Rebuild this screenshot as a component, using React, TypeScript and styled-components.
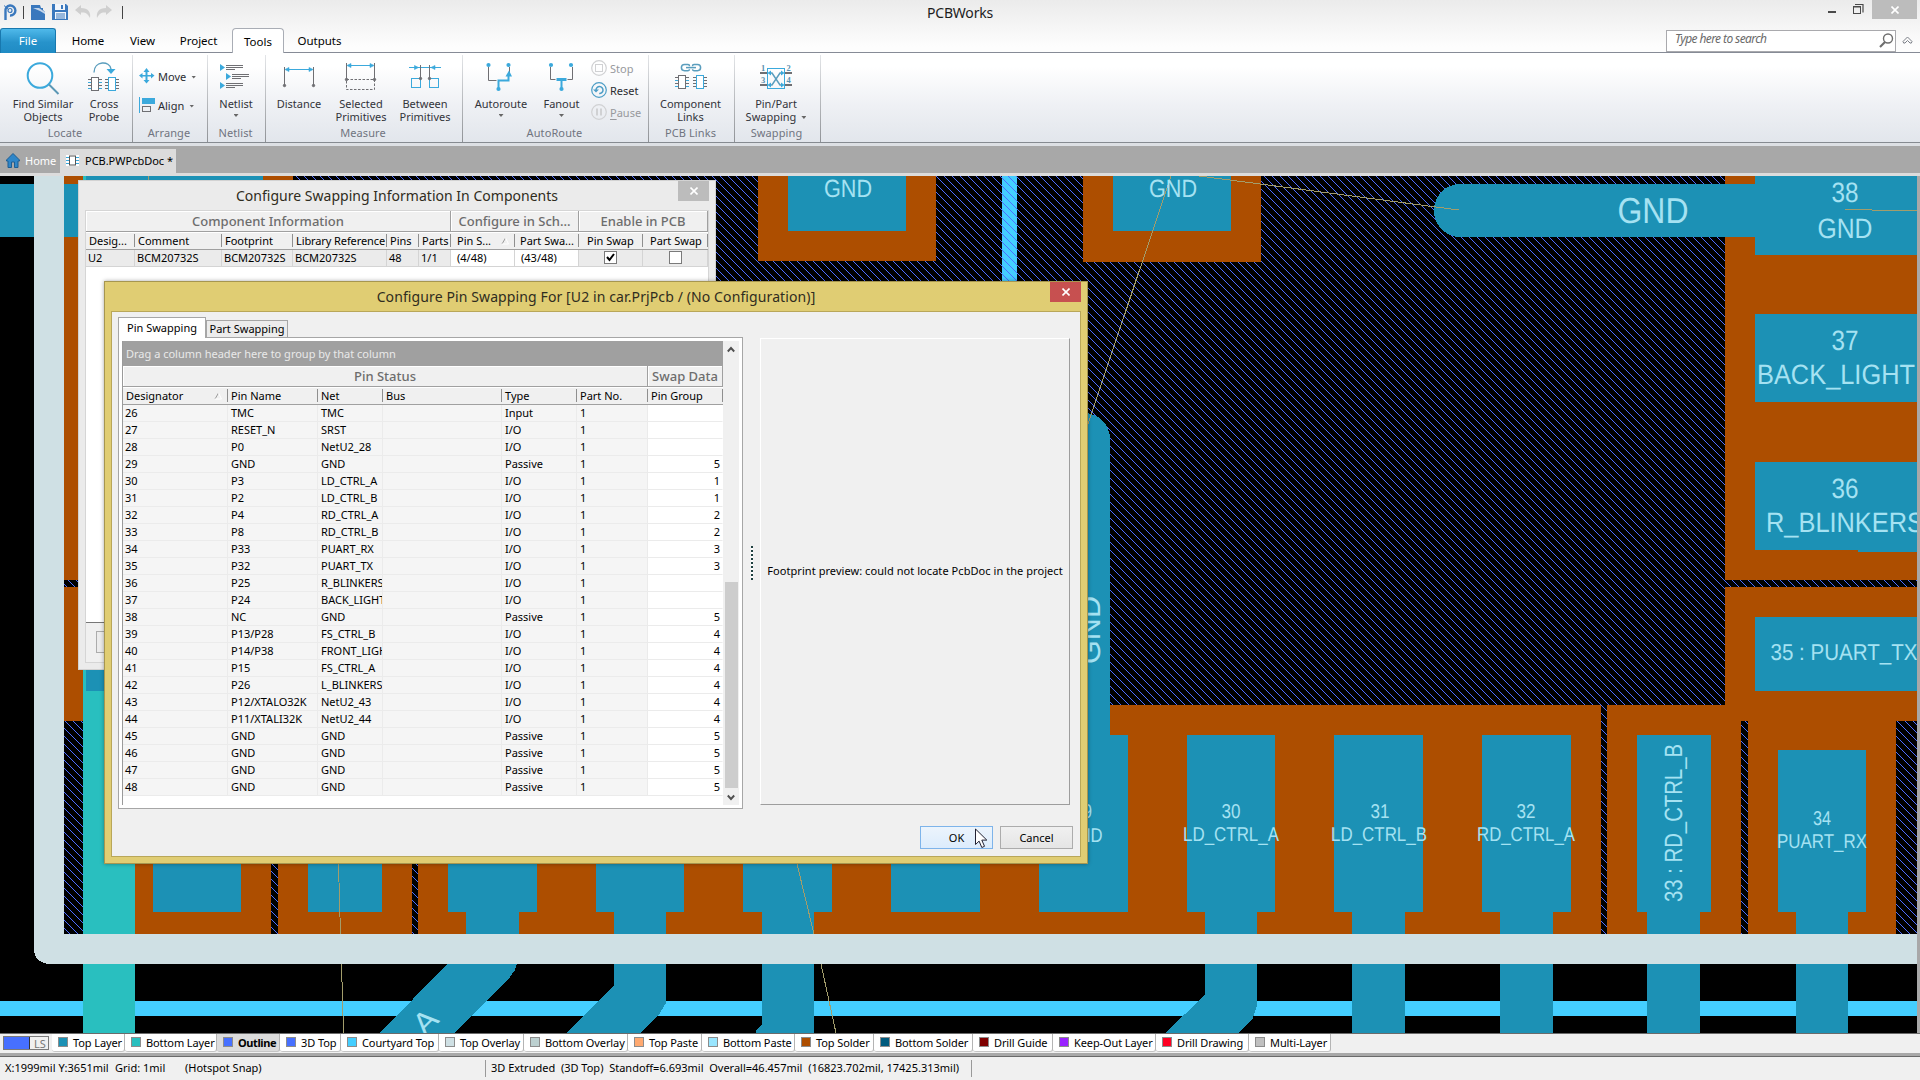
import React from "react";
import styled, { createGlobalStyle, css } from "styled-components";

const UI = `"Noto Sans", "Open Sans", sans-serif`;
const BOARD = `"Liberation Sans", Arial, sans-serif`;
const PAD = "#1c91b5";
const SOLDER = "#ad4e00";
const SKY = "#3ba9dc";
const INK = "#6f6f73";

const Global = createGlobalStyle`
  * { box-sizing: border-box; }
  html, body { margin: 0; padding: 0; overflow: hidden; }
  body { font-family: ${UI}; font-size: 11px; color: #000; }
`;

/* ---------- frame ---------- */

const Window = styled.div`
  position: relative;
  width: 1920px;
  height: 1080px;
  display: flex;
  flex-direction: column;
  overflow: hidden;
  background: #f0f0f0;
  white-space: nowrap;
`;

const Header = styled.header`
  height: 53px;
  flex: none;
  display: flex;
  flex-direction: column;
  background: linear-gradient(#ebebeb, #fdfdfd 90%);
  border-bottom: 1px solid #868b96;
`;

const TitleBar = styled.div`
  height: 27px;
  flex: none;
  display: grid;
  grid-template-columns: 300px 1fr 300px;
`;

const QuickBar = styled.div`
  display: flex;
  align-items: center;
  height: 24px;
  padding-left: 3px;
`;

const QuickDivider = styled.i<{ $l: number; $r: number }>`
  width: 1px;
  height: 13px;
  background: #444;
  margin: 1px ${(p) => p.$r}px 0 ${(p) => p.$l}px;
`;

const QuickIcon = styled.svg<{ $l?: number }>`
  flex: none;
  margin-left: ${(p) => p.$l ?? 0}px;
`;

const AppTitle = styled.div`
  text-align: center;
  font-size: 14px;
  line-height: 25px;
  letter-spacing: -0.2px;
  color: #1d1d1d;
`;

const WindowButtons = styled.div`
  display: flex;
  justify-content: flex-end;
  align-items: flex-start;
  padding-right: 3px;
  svg { display: block; }
`;

const CloseCap = styled.div<{ $w: number; $h: number; $bg: string }>`
  width: ${(p) => p.$w}px;
  height: ${(p) => p.$h}px;
  background: ${(p) => p.$bg};
  display: flex;
  align-items: center;
  justify-content: center;
`;

const TabStrip = styled.nav`
  display: flex;
  height: 26px;
  align-items: flex-end;
`;

const FileTab = styled.div`
  width: 56px;
  height: 25px;
  line-height: 23px;
  border: 1px solid #1878ae;
  border-bottom: 0;
  border-radius: 3px 3px 0 0;
  background: linear-gradient(#4fb9ea, #2793cb 55%, #1f8bc4);
  color: #fff;
  text-align: center;
  font-size: 11.5px;
`;

const RibbonTab = styled.div<{ $w: number; $active?: boolean }>`
  width: ${(p) => p.$w}px;
  height: 25px;
  line-height: 26px;
  text-align: center;
  font-size: 11.5px;
  ${(p) =>
    p.$active &&
    css`
      height: 26px;
      line-height: 25px;
      margin-bottom: -1px;
      background: #fff;
      border: 1px solid #a9adb5;
      border-bottom: 0;
      border-radius: 4px 4px 0 0;
    `}
`;

const SearchRow = styled.div`
  margin-left: auto;
  display: flex;
  align-items: center;
  height: 26px;
  gap: 6px;
  padding-right: 7px;
`;

const SearchBox = styled.div`
  width: 230px;
  height: 22px;
  margin-top: 1px;
  border: 1px solid #a9a9ad;
  background: #fff;
  display: flex;
  align-items: center;
  justify-content: space-between;
  padding: 0 1px 0 8px;
  font-size: 12px;
  font-style: italic;
  letter-spacing: -0.6px;
  color: #6a6a6a;
  > span { margin-top: -4px; }
`;

const Ribbon = styled.div`
  height: 90px;
  flex: none;
  display: flex;
  padding-top: 2px;
  background: linear-gradient(#ffffff 15%, #eef0f4 60%, #e2e6ec);
  border-bottom: 1px solid #868b91;
`;

const Group = styled.section<{ $w: number }>`
  width: ${(p) => p.$w}px;
  height: 87px;
  display: flex;
  flex-direction: column;
  border-right: 1px solid;
  border-image: linear-gradient(#e4e6e9, #8f9296) 1;
`;

const GroupBody = styled.div<{ $pad?: number }>`
  height: 70px;
  flex: none;
  display: flex;
  padding-left: ${(p) => p.$pad ?? 0}px;
`;

const GroupName = styled.div`
  text-align: center;
  line-height: 16px;
  padding-right: 2px;
  color: #70747f;
  letter-spacing: 0.1px;
`;

const BigButton = styled.div<{ $w: number }>`
  width: ${(p) => p.$w}px;
  display: flex;
  flex-direction: column;
  align-items: center;
  text-align: center;
  color: #33343a;
  line-height: 13px;
  padding-top: 6px;
  > svg { height: 34px; width: 40px; margin-bottom: 2px; flex: none; }
`;

const Caret = styled.i`
  display: inline-block;
  width: 5px;
  height: 3px;
  background: #666;
  clip-path: polygon(0 0, 100% 0, 50% 100%);
  margin: 0 0 2px 5px;
`;

const CaretBelow = styled(Caret)`
  margin: 4px 0 0;
`;

const SmallColumn = styled.div<{ $gap: number; $top: number; $left: number }>`
  height: 70px;
  flex: none;
  display: flex;
  flex-direction: column;
  gap: ${(p) => p.$gap}px;
  padding: ${(p) => p.$top}px 0 0 ${(p) => p.$left}px;
`;

const SmallButton = styled.div<{ $dim?: boolean }>`
  height: 16px;
  flex: none;
  display: flex;
  align-items: center;
  gap: 3px;
  color: ${(p) => (p.$dim ? "#97999d" : "#2b2c31")};
  u { text-underline-offset: 2px; }
`;

const DocBar = styled.div`
  height: 33px;
  flex: none;
  display: flex;
  align-items: flex-end;
  background: #a8a8a8;
  border-top: 3px solid #dde0e4;
  border-bottom: 3px solid #dcdcdc;
`;

const DocTab = styled.div<{ $w: number; $active?: boolean }>`
  width: ${(p) => p.$w}px;
  height: 24px;
  display: flex;
  align-items: center;
  gap: ${(p) => (p.$active ? 6 : 5)}px;
  padding: 0 0 2px 6px;
  color: ${(p) => (p.$active ? "#000" : "#fff")};
  background: ${(p) => (p.$active ? "#dcdcdc" : "transparent")};
`;

const Workspace = styled.main`
  height: 857px;
  flex: none;
  background: #a8a8a8;
  svg { display: block; }
`;

/* ---------- bottom bars ---------- */

const LayerBar = styled.div`
  height: 20px;
  flex: none;
  display: flex;
  border-top: 1px solid #6b6b6b;
  padding-left: 3px;
`;

const LayerSet = styled.div`
  width: 46px;
  height: 14px;
  margin: 2px 3px 0 0;
  display: flex;
  border: 1px solid #7a7a7a;
  color: #777;
  line-height: 13px;
  &::before {
    content: "";
    width: 25px;
    margin-right: 4px;
    background: #4770ff;
    border-right: 1px solid #333;
  }
`;

const LayerTab = styled.div<{ $w: number; $active?: boolean }>`
  width: ${(p) => p.$w}px;
  height: 18px;
  display: flex;
  align-items: center;
  gap: 5px;
  padding-left: 6px;
  background: ${(p) => (p.$active ? "#dcdcdc" : "#fff")};
  border-right: 1px solid #b4b4b4;
  border-bottom: 1px solid #c4c4c4;
  border-radius: 0 0 3px 3px;
  font-weight: ${(p) => (p.$active ? 700 : 400)};
  letter-spacing: ${(p) => (p.$active ? -0.4 : -0.1)}px;
  overflow: hidden;
`;

const Swatch = styled.i<{ $c: string }>`
  width: 10px;
  height: 10px;
  flex: none;
  margin-bottom: 1px;
  background: ${(p) => p.$c};
  border: 1px solid #8c8c8c;
`;

const StatusBar = styled.footer`
  height: 27px;
  flex: none;
  display: flex;
  align-items: center;
  background: #f0f0f0;
  border-top: 3px solid #a8a8a8;
  box-shadow: inset 0 1px 0 #6a6a6a;
  padding: 0 0 1px 5px;
`;

const StatusText = styled.span<{ $w: number }>`
  width: ${(p) => p.$w}px;
  white-space: pre;
`;

const StatusRule = styled.i`
  width: 1px;
  height: 17px;
  background: #999;
  margin: 1px 5px 0 0;
`;

/* ---------- dialogs ---------- */

const Dialog = styled.div<{ $x: number; $y: number; $w: number; $h: number; $gold?: boolean }>`
  position: absolute;
  left: ${(p) => p.$x}px;
  top: ${(p) => p.$y}px;
  width: ${(p) => p.$w}px;
  height: ${(p) => p.$h}px;
  display: flex;
  flex-direction: column;
  background: ${(p) => (p.$gold ? "#e0cd73" : "#ebebeb")};
  border: 1px solid ${(p) => (p.$gold ? "#a69650" : "#d2d2d2")};
  padding: 0 6px 6px;
  ${(p) => p.$gold && "box-shadow: 0 0 4px rgba(0, 0, 0, 0.35);"}
`;

const DialogTitle = styled.div<{ $ls: number }>`
  height: 29px;
  flex: none;
  display: grid;
  grid-template-columns: 31px 1fr 31px;
  text-align: center;
  font-size: 14px;
  line-height: 29px;
  letter-spacing: ${(p) => p.$ls}px;
  color: #2f2c20;
`;

const DialogBody = styled.div`
  flex: 1;
  min-height: 0;
  display: flex;
  flex-direction: column;
  background: #f0f0f0;
  border: 1px solid #b9a759;
`;

const Columns = styled.div`
  display: flex;
  height: 492px;
  margin-top: 5px;
  padding-left: 6px;
`;

const TabPane = styled.div`
  width: 625px;
  display: flex;
  flex-direction: column;
`;

const PageTabs = styled.div`
  height: 20px;
  flex: none;
  display: flex;
  align-items: flex-end;
`;

const PageTab = styled.div<{ $w: number; $active?: boolean }>`
  width: ${(p) => p.$w}px;
  height: ${(p) => (p.$active ? 21 : 17)}px;
  line-height: ${(p) => (p.$active ? 19 : 15)}px;
  margin-bottom: ${(p) => (p.$active ? -1 : 0)}px;
  z-index: ${(p) => (p.$active ? 1 : 0)};
  text-align: center;
  background: ${(p) => (p.$active ? "#fff" : "#ececec")};
  border: 1px solid #a6a6a6;
  border-bottom: 0;
`;

const Page = styled.div`
  flex: 1;
  display: flex;
  background: #fff;
  border: 1px solid #a6a6a6;
  padding: 3px;
`;

const PinGrid = styled.div`
  width: 601px;
  border-left: 1px solid #9a9a9a;
`;

const DragHint = styled.div`
  height: 25px;
  line-height: 26px;
  padding-left: 3px;
  background: #a0a0a0;
  color: #e9e9e9;
`;

const GridLine = styled.div<{ $cols: string; $h: number }>`
  display: grid;
  grid-template-columns: ${(p) => p.$cols};
  height: ${(p) => p.$h}px;
`;

const Band = styled.div`
  background: #f0f0f0;
  border-right: 1px solid #a0a0a0;
  border-bottom: 1px solid #a0a0a0;
  box-shadow: inset 1px 1px 0 #fff;
  text-align: center;
  font-size: 13px;
  font-weight: 500;
  line-height: 20px;
  color: #6d6d6d;
  overflow: hidden;
`;

const Head = styled.div<{ $pad?: number; $center?: boolean; $ls?: number }>`
  display: flex;
  justify-content: space-between;
  align-items: center;
  background: #f0f0f0;
  border-bottom: 1px solid #a0a0a0;
  padding-left: ${(p) => p.$pad ?? 3}px;
  line-height: 15px;
  letter-spacing: ${(p) => p.$ls ?? 0}px;
  box-shadow: inset 0 1px 0 #fff;
  overflow: hidden;
  &::after {
    content: "";
    width: 1px;
    height: 13px;
    background: #8f8f8f;
  }
`;

const SortMark = styled.span`
  margin: 0 5px 0 auto;
  display: flex;
`;

const Cell = styled.div<{ $editable?: boolean; $tone?: string; $center?: boolean; $pad?: number }>`
  padding: 0 2px 0 ${(p) => p.$pad ?? 2}px;
  line-height: 16px;
  overflow: hidden;
  background: ${(p) => (p.$editable ? "#fff" : p.$tone ?? "#f5f5f5")};
  border-right: 1px solid ${(p) => (p.$editable ? "#fff" : p.$tone ? "#d4d4d4" : "#ebebeb")};
  border-bottom: 1px solid ${(p) => (p.$tone ? "#d4d4d4" : "#ebebeb")};
  text-align: ${(p) => (p.$editable ? "right" : "left")};
  ${(p) => p.$center && "display: flex; justify-content: center; align-items: center;"}
`;

const ScrollBar = styled.div`
  width: 16px;
  background: #f0f0f0;
  display: flex;
  flex-direction: column;
  align-items: center;
  padding: 5px 0 4px;
`;

const Thumb = styled.div`
  width: 13px;
  height: 206px;
  margin: auto 0 6px;
  background: #cdcdcd;
`;

const Splitter = styled.div`
  width: 17px;
  display: flex;
  align-items: center;
  justify-content: center;
  &::before {
    content: "";
    width: 2px;
    height: 34px;
    margin-left: 1px;
    background: repeating-linear-gradient(#1e4040 0 2px, #fff 2px 4px);
  }
`;

const Preview = styled.div`
  width: 310px;
  height: 467px;
  margin-top: 21px;
  padding-bottom: 2px;
  display: flex;
  align-items: center;
  justify-content: center;
  letter-spacing: 0.06px;
  border: 1px solid #fff;
  border-right-color: #9d9d9d;
  border-bottom-color: #9d9d9d;
`;

const Buttons = styled.div`
  display: flex;
  justify-content: flex-end;
  gap: 7px;
  padding: 17px 7px 0 0;
`;

const Button = styled.div<{ $primary?: boolean }>`
  width: 73px;
  height: 23px;
  line-height: 21px;
  text-align: center;
  border: 1px solid ${(p) => (p.$primary ? "#7eb4ea" : "#acacac")};
  background: ${(p) => (p.$primary ? "linear-gradient(#ecf4fc, #dcecfc)" : "linear-gradient(#f0f0f0, #e5e5e5)")};
`;

const CompGrid = styled.div`
  flex: 1;
  background: #fff;
  border: 1px solid #d5d5d5;
  display: flex;
  flex-direction: column;
`;

const CompFooter = styled.div`
  height: 40px;
  margin-top: auto;
  background: #f0f0f0;
  border-top: 1px solid #777;
  padding: 8px 0 0 10px;
`;

const MenuButton = styled.div`
  width: 80px;
  height: 22px;
  border: 1px solid #acacac;
  background: #ececec;
`;

const Check = styled.i`
  width: 13px;
  height: 13px;
  background: #fff;
  border: 1px solid #7a7a7a;
  display: flex;
  margin-top: -2px;
`;

const Pointer = styled.svg`
  position: absolute;
  left: 974px;
  top: 828px;
`;

/* ---------- drawings ---------- */

const X = () => (
  <svg width="8" height="8" viewBox="0 0 8 8" stroke="#fff" strokeWidth="1.6" fill="none">
    <path d="M.5.5l7 7M7.5.5l-7 7" />
  </svg>
);

const Triangle = () => (
  <svg width="8" height="8" fill="none">
    <path d="M1 7L4.500 1" stroke="#9a9a9a" />
    <path d="M4.500 1L7.500 7H1" stroke="#fff" />
  </svg>
);

const Chevron = ({ down }: { down?: boolean }) => (
  <svg width="8" height="7" fill="none" stroke="#505050" strokeWidth="1.9">
    <path d={down ? "M.8 1.500L4 5l3.200-3.500" : "M.8 5.500L4 2l3.200 3.500"} />
  </svg>
);

const Chip = ({ x, y, c }: { x: number; y: number; c: string }) => {
  const pins = c === INK ? SKY : INK;
  return (
    <g fill="none">
      {[2.5, 5.5, 8.5, 11.5].map((d, i) => (
        <path
          key={d}
          d={`M${x} ${y + d}h3M${x + 11} ${y + d}h3`}
          stroke={i % 2 ? pins : INK}
        />
      ))}
      <rect x={x + 3.5} y={y + 0.5} width="7" height="13" stroke={c} fill="#fff" />
    </g>
  );
};

const icons: Record<string, React.ReactNode> = {
  find: (
    <g fill="none" stroke={SKY} strokeWidth="2">
      <circle cx="17" cy="14.500" r="12.300" />
      <path d="M26 23.500l9.500 9.500" stroke="#5b97b5" />
    </g>
  ),
  cross: (
    <g>
      <path d="M10 11.500C10 -.5 26 -.5 27 8" fill="none" stroke="#5a9dbd" strokeWidth="1.400" />
      <path d="M22.500 8h9l-4.500 5z" fill={SKY} />
      <Chip x={4} y={16} c={INK} />
      <Chip x={21} y={16} c={SKY} />
    </g>
  ),
  netlist: (
    <g>
      {[[4, 3], [10, 12], [4, 21]].map(([x, y]) => (
        <g key={y}>
          <path d={`M${x} ${y}l5 3.500l-5 3.500z`} fill={SKY} />
          <path d={`M${x + 6} ${y + 1.500}h17M${x + 6} ${y + 3.500}h17M${x + 6} ${y + 5.500}h9`} stroke={INK} />
        </g>
      ))}
    </g>
  ),
  distance: (
    <g stroke={INK}>
      <path d="M5.500 6v18M34.500 6v18" fill="none" />
      <path d="M7 8.500h26" stroke={SKY} />
      <path d="M6 8.500l4-2v4zM34 8.500l-4-2v4z" fill={SKY} stroke={SKY} strokeWidth=".6" />
      <circle cx="5.500" cy="24.500" r="1.200" fill={INK} />
      <circle cx="34.500" cy="24.500" r="1.200" fill={INK} />
    </g>
  ),
  selected: (
    <g stroke={INK} fill="none">
      <path d="M5.500 2v17M33.500 2v17" />
      <path d="M7 4.500h25" stroke={SKY} />
      <path d="M6 4.500l4-2v4zM33 4.500l-4-2v4z" fill={SKY} stroke={SKY} strokeWidth=".6" />
      <rect x="5.500" y="18.500" width="28" height="10" strokeDasharray="2.500 1.500" />
      <circle cx="5.500" cy="18.500" r="1.200" fill={INK} />
      <circle cx="33.500" cy="18.500" r="1.200" fill={INK} />
    </g>
  ),
  between: (
    <g fill="none" stroke={SKY}>
      <path d="M4 6.500h32" />
      <path d="M9.500 4.500v4l4-2zM30 4.500v4l-4-2z" fill={SKY} strokeWidth=".6" />
      <rect x="6.500" y="17.500" width="9" height="9" />
      <rect x="24.500" y="17.500" width="9" height="9" />
      <path d="M15.500 4v13M24.500 4v13" stroke={INK} />
      <circle cx="15.500" cy="17.500" r="1.200" fill={INK} stroke={INK} />
      <circle cx="24.500" cy="17.500" r="1.200" fill={INK} stroke={INK} />
    </g>
  ),
  autoroute: (
    <g fill="none">
      <path d="M7.500 6v13.500h8" stroke={INK} />
      <path d="M28.500 6v6" stroke={INK} />
      <path d="M17.500 27v-7.500h10v-6" stroke={SKY} strokeWidth="2" />
      <path d="M24.500 15.500l3.500-6l3 6z" fill={SKY} />
      <g fill={SKY}>
        <circle cx="7.500" cy="4" r="2.100" />
        <circle cx="27.500" cy="4" r="2.100" />
        <circle cx="17.500" cy="28" r="2.100" />
      </g>
    </g>
  ),
  fanout: (
    <g fill="none">
      <path d="M8.500 6v12.500h5M30.500 6v12.500h-5" stroke={INK} />
      <path d="M14.500 18.500h10" stroke={SKY} strokeWidth="3" />
      <path d="M19.500 19v8" stroke={SKY} strokeWidth="2" />
      <g fill={SKY}>
        <circle cx="9" cy="4" r="2.100" />
        <circle cx="29" cy="4" r="2.100" />
        <circle cx="19.500" cy="28" r="2.100" />
      </g>
    </g>
  ),
  links: (
    <g>
      <g fill="none" stroke="#5a9dbd" strokeWidth="1.500">
        <path d="M18.500 5.200v-.2q0-1.500-1.500-1.500h-3.500a3.100 3.100 0 0 0 0 6.200h3.500q1.500 0 1.500-1.400" />
        <path d="M21.500 5.200v-.2q0-1.500 1.500-1.500h3.500a3.100 3.100 0 0 1 0 6.200h-3.500q-1.500 0-1.500-1.400" />
        <path d="M15 6.600h10" />
      </g>
      <Chip x={4} y={14} c={INK} />
      <Chip x={22} y={14} c={SKY} />
    </g>
  ),
  swap: (
    <g fill="none">
      <path d="M4 12h7M29 12h7M4 24h7M29 24h7" stroke={INK} strokeWidth="1.800" />
      <rect x="11.500" y="7.500" width="17" height="20" stroke={SKY} />
      <path d="M14 12h2l8 12h2M14 24h2l8-12h2" stroke="#5a9dbd" strokeWidth="1.500" />
      <path d="M11.500 12l3.500-2.500v5zM28.500 12l-3.500-2.500v5zM11.500 24l3.500-2.500v5zM28.500 24l-3.500-2.500v5z" fill={SKY} />
      <g fill="#5a8fae" fontSize="8.500" fontWeight="700" fontFamily="Liberation Serif, serif">
        <text x="5" y="10">1</text>
        <text x="30.500" y="10">2</text>
        <text x="5" y="22">3</text>
        <text x="30.500" y="22">4</text>
      </g>
    </g>
  ),
};

const BigIcon = ({ name }: { name: string }) => (
  <svg width="40" height="34" viewBox="0 0 40 34">
    {icons[name]}
  </svg>
);

const RoundIcon = ({ kind }: { kind: "stop" | "reset" | "pause" }) => {
  const c = kind === "reset" ? "#4c9dc6" : "#d0d1d3";
  return (
    <svg width="16" height="16" fill="none" stroke={c}>
      <circle cx="8" cy="8" r="7.300" strokeWidth="1.200" />
      {kind === "stop" && <rect x="4.500" y="4.500" width="7" height="7" />}
      {kind === "pause" && <path d="M6 4.500v7M10 4.500v7" strokeWidth="2" />}
      {kind === "reset" && (
        <>
          <path d="M5 8a3.500 3.500 0 1 1 3.200 3.500" strokeWidth="1.500" />
          <path d="M2 7.500h6l-3 3z" fill={c} stroke="none" />
        </>
      )}
    </svg>
  );
};

/* ---------- board canvas ---------- */

type Box = [number, number, number, number];

const solder: Box[] = [
  [64, 176, 19, 404], [64, 587, 19, 134], [263, 176, 30, 20],
  [758, 176, 178, 85], [1083, 176, 178, 86],
  [1725, 176, 192, 404], [1725, 587, 192, 134],
  [134, 800, 137, 134], [278, 800, 134, 134], [418, 705, 1183, 229],
  [1607, 705, 134, 229], [1741, 705, 155, 16], [1748, 705, 148, 229],
];

const pads: Box[] = [
  [64, 184, 19, 53], [86, 176, 177, 20],
  [788, 176, 118, 55], [1113, 176, 118, 55],
  [1755, 176, 162, 79], [1755, 314, 162, 88], [1755, 462, 162, 88], [1858, 540, 59, 12], [1755, 617, 162, 74],
  [153, 800, 88, 112], [308, 800, 74, 112], [448, 800, 89, 112], [596, 800, 88, 112],
  [743, 800, 89, 112], [891, 800, 89, 112], [1039, 735, 89, 177],
  [1187, 735, 88, 177], [1334, 735, 89, 177], [1482, 735, 89, 177], [1637, 735, 74, 177], [1778, 750, 88, 162],
  [1352, 911, 53, 122], [1500, 911, 53, 122], [1647, 911, 53, 122], [1796, 911, 52, 122],
  [466, 911, 53, 24], [614, 911, 52, 40], [762, 911, 52, 40], [1205, 911, 52, 40],
];

type Label = { x: number; y: number; s: number; t: string; w: number; r?: number };

/* x, y give the middle of the cap height; w is the drawn width */
const labels: Label[] = [
  { x: 848, y: 188, s: 25, t: "GND", w: 48 },
  { x: 1173, y: 188, s: 25, t: "GND", w: 48 },
  { x: 1653, y: 210, s: 36, t: "GND", w: 71 },
  { x: 1845, y: 192, s: 28, t: "38", w: 27 },
  { x: 1845, y: 228, s: 28, t: "GND", w: 55 },
  { x: 1845, y: 340, s: 28, t: "37", w: 27 },
  { x: 1836, y: 374, s: 28, t: "BACK_LIGHT", w: 158 },
  { x: 1845, y: 488, s: 28, t: "36", w: 27 },
  { x: 1845, y: 522, s: 28, t: "R_BLINKERS", w: 158 },
  { x: 1844, y: 652, s: 23, t: "35 : PUART_TX", w: 147 },
  { x: 1083, y: 811, s: 20, t: "29", w: 18 },
  { x: 1084, y: 835, s: 20, t: "GND", w: 37 },
  { x: 1231, y: 811, s: 20, t: "30", w: 19 },
  { x: 1231, y: 834, s: 20, t: "LD_CTRL_A", w: 96 },
  { x: 1380, y: 811, s: 20, t: "31", w: 19 },
  { x: 1379, y: 834, s: 20, t: "LD_CTRL_B", w: 96 },
  { x: 1526, y: 811, s: 20, t: "32", w: 19 },
  { x: 1526, y: 834, s: 20, t: "RD_CTRL_A", w: 98 },
  { x: 1822, y: 818, s: 20, t: "34", w: 18 },
  { x: 1822, y: 841, s: 20, t: "PUART_RX", w: 90 },
  { x: 1673, y: 823, s: 25, t: "33 : RD_CTRL_B", w: 158, r: -90 },
  { x: 1089, y: 630, s: 30, t: "GND", w: 68, r: -90 },
  { x: 425, y: 1021, s: 30, t: "A", w: 22, r: -45 },
];

const Board = () => (
  <svg width="1917" height="857" viewBox="0 176 1917 857" shapeRendering="crispEdges">
    <defs>
      <pattern id="hatch" width="8" height="8" patternUnits="userSpaceOnUse">
        {[0, 1, 2, 3, 4, 5, 6, 7].map((i) => (
          <rect key={i} x={i} y={i} width="1" height="1" fill="#4d6dff" />
        ))}
      </pattern>
    </defs>
    <rect y="176" width="1917" height="857" />
    <rect y="1001" width="1917" height="15" fill="#44ceff" />
    <rect y="184" width="64" height="53" fill={PAD} />
    <rect x="1002" y="176" width="15" height="120" fill="#44ceff" />
    <rect x="64" y="176" width="1853" height="758" fill="url(#hatch)" />
    {solder.map(([x, y, w, h], i) => (
      <rect key={i} x={x} y={y} width={w} height={h} fill={SOLDER} />
    ))}
    <rect x="83" y="176" width="52" height="857" fill="#29bfbf" />
    <rect x="86" y="660" width="49" height="31" fill={PAD} />
    <g fill={PAD}>
      <path d="M1765 184H1460a26 26.500 0 0 0 0 53h305z" />
      <path d="M1058 760V439a26 26 0 0 1 52 0v321z" />
      {pads.map(([x, y, w, h], i) => (
        <rect key={i} x={x} y={y} width={w} height={h} />
      ))}
      <path d="M447 964H517L515 970L510 977L454 1033H380z" />
      <path d="M614 940H666V1003L660 1013L640 1033H567L614 985z" />
      <path d="M762 940H814V1033H756V1030L762 1024z" />
      <path d="M1205 940H1257V1005L1253 1018L1239 1033H1165L1205 995z" />
    </g>
    <path d="M34 176H64V934H1917V964H48Q34 962 34 948z" fill="#cfe0e4" />
    <g fill="none" stroke="#a39d6b">
      <path d="M148.500 176v10M1171 176L1088 424M1199 176L1459 210M1845 209.500h27M1872 210.500h45" />
      <path d="M338.500 864L340.500 934M341.500 964L343.500 1033M797 864L814 934M821 964L836 1033" />
    </g>
    <g fill="#a5e2f2" fontFamily={BOARD} textAnchor="middle" textRendering="geometricPrecision">
      {labels.map((l, i) => (
        <text
          key={i}
          x={l.x}
          y={l.y}
          dy={l.s * 0.36}
          fontSize={l.s}
          textLength={l.w}
          lengthAdjust="spacingAndGlyphs"
          transform={l.r ? `rotate(${l.r} ${l.x} ${l.y})` : undefined}
        >
          {l.t}
        </text>
      ))}
    </g>
  </svg>
);

/* ---------- data ---------- */

const pins = `26|TMC|TMC|Input|
27|RESET_N|SRST|I/O|
28|P0|NetU2_28|I/O|
29|GND|GND|Passive|5
30|P3|LD_CTRL_A|I/O|1
31|P2|LD_CTRL_B|I/O|1
32|P4|RD_CTRL_A|I/O|2
33|P8|RD_CTRL_B|I/O|2
34|P33|PUART_RX|I/O|3
35|P32|PUART_TX|I/O|3
36|P25|R_BLINKERS|I/O|
37|P24|BACK_LIGHT|I/O|
38|NC|GND|Passive|5
39|P13/P28|FS_CTRL_B|I/O|4
40|P14/P38|FRONT_LIGHT|I/O|4
41|P15|FS_CTRL_A|I/O|4
42|P26|L_BLINKERS|I/O|4
43|P12/XTALO32K|NetU2_43|I/O|4
44|P11/XTALI32K|NetU2_44|I/O|4
45|GND|GND|Passive|5
46|GND|GND|Passive|5
47|GND|GND|Passive|5
48|GND|GND|Passive|5`
  .split("\n")
  .map((r) => r.split("|"));

const layers: [string, string, number][] = [
  ["Top Layer", PAD, 73], ["Bottom Layer", "#29bfbf", 92], ["Outline", "#4770ff", 63],
  ["3D Top", "#4770ff", 61], ["Courtyard Top", "#44ceff", 98], ["Top Overlay", "#cfe0e4", 85],
  ["Bottom Overlay", "#bcd0d0", 104], ["Top Paste", "#ffa970", 74], ["Bottom Paste", "#99e6ff", 93],
  ["Top Solder", SOLDER, 79], ["Bottom Solder", "#005a7d", 99], ["Drill Guide", "#800000", 80],
  ["Keep-Out Layer", "#9922ff", 103], ["Drill Drawing", "#ff0022", 93], ["Multi-Layer", "#c0c0c0", 82],
];

const PIN_COLS = "105px 90px 65px 119px 75px 71px 75px";
const COMP_COLS = "49px 87px 71px 94px 32px 32px 64px 64px 64px 1fr";

/* ---------- sections ---------- */

const Top = () => (
  <Header>
    <TitleBar>
      <QuickBar>
        <QuickIcon width="14" height="18" viewBox="0 0 14 18" fill="none" stroke="#3a78bd">
          <path d="M2.500 17V8.500A5 5 0 1 1 7 12.500" strokeWidth="2.400" />
          <circle cx="7" cy="7.500" r="2" strokeWidth="1.200" />
          <path d="M1 2.500L6 7" />
        </QuickIcon>
        <QuickDivider $l={6} $r={7} />
        <QuickIcon width="14" height="16" fill="#3a78bd">
          <path d="M0 1h9l1 3h2v2l2 2v8H0z" />
          <path d="M2 4h6l6 4v2L9 7z" fill="#c3d6ec" />
        </QuickIcon>
        <QuickIcon $l={7} width="17" height="16" viewBox="0 0 17 16">
          <path d="M0 0h14l2 2v14H0z" fill="#3a78bd" />
          <path d="M3 0h10v6H3zM3 8h11v7H3z" fill="#f2f6fb" />
          <path d="M9 1h2v4H9zM4 9.500h9v1H4zM4 11.500h9v1H4zM4 13.500h9v1H4z" fill="#3a78bd" />
        </QuickIcon>
        <QuickIcon $l={6} width="38" height="16" viewBox="0 0 38 16" fill="#cfcfcf">
          <path d="M0 6l6-5v3c7 0 10 4 9 10c-2-4-4-6-9-5.500V11z" />
          <path d="M37 6l-6-5v3c-7 0-10 4-9 10c2-4 4-6 9-5.500V11z" />
        </QuickIcon>
        <QuickDivider $l={9} $r={0} />
      </QuickBar>
      <AppTitle>PCBWorks</AppTitle>
      <WindowButtons>
        <svg width="44" height="19" fill="none" stroke="#4a4a4a">
          <path d="M0 12h8" strokeWidth="2" />
          <rect x="25.500" y="6.500" width="7" height="7" />
          <path d="M25 7h8M27 4.500h8v8" strokeWidth="1.200" />
        </svg>
        <CloseCap $w={45} $h={19} $bg="#bcbcbc"><X /></CloseCap>
      </WindowButtons>
    </TitleBar>
    <TabStrip>
      <FileTab>File</FileTab>
      <RibbonTab $w={64}>Home</RibbonTab>
      <RibbonTab $w={45}>View</RibbonTab>
      <RibbonTab $w={67}>Project</RibbonTab>
      <RibbonTab $w={52} $active>Tools</RibbonTab>
      <RibbonTab $w={71}>Outputs</RibbonTab>
      <SearchRow>
        <SearchBox>
          <span>Type here to search</span>
          <svg width="15" height="15" fill="none" stroke="#6e6e6e">
            <circle cx="9" cy="5.500" r="4.500" strokeWidth="1.400" />
            <path d="M6 9L1 14" strokeWidth="2.200" />
          </svg>
        </SearchBox>
        <svg width="11" height="9" fill="none" stroke="#7c8088">
          <path d="M1 5.500L5.500 1L10 5.500Q9.500 8 8 7L5.500 4.500L3 7Q1.500 8 1 5.500z" />
        </svg>
      </SearchRow>
    </TabStrip>
  </Header>
);

const RibbonBar = () => (
  <Ribbon>
    <Group $w={133}>
      <GroupBody $pad={3}>
        <BigButton $w={80}><BigIcon name="find" />Find Similar<br />Objects</BigButton>
        <BigButton $w={42}><BigIcon name="cross" />Cross<br />Probe</BigButton>
      </GroupBody>
      <GroupName>Locate</GroupName>
    </Group>
    <Group $w={75}>
      <SmallColumn $top={13} $left={6} $gap={13}>
        <SmallButton>
          <svg width="16" height="16" fill={SKY}>
            <path d="M7.500 0l3 4H8.500v3H12V5l3.500 2.500L12 10.500V8.500H8.500V12h2l-3 3.500-3-3.500h2V8.500H3.500v2L0 7.500 3.500 5v2h3V4h-2z" />
          </svg>
          <span>Move<Caret /></span>
        </SmallButton>
        <SmallButton>
          <svg width="16" height="16" fill="none">
            <path d="M.5 0v16" stroke={SKY} />
            <rect x="3" y="1" width="13" height="6" fill={SKY} />
            <rect x="3.500" y="9.500" width="8" height="5" stroke={INK} />
          </svg>
          <span>Align<Caret /></span>
        </SmallButton>
      </SmallColumn>
      <GroupName>Arrange</GroupName>
    </Group>
    <Group $w={58}>
      <GroupBody>
        <BigButton $w={56}><BigIcon name="netlist" />Netlist<CaretBelow /></BigButton>
      </GroupBody>
      <GroupName>Netlist</GroupName>
    </Group>
    <Group $w={197}>
      <GroupBody $pad={3}>
        <BigButton $w={60}><BigIcon name="distance" />Distance</BigButton>
        <BigButton $w={64}><BigIcon name="selected" />Selected<br />Primitives</BigButton>
        <BigButton $w={64}><BigIcon name="between" />Between<br />Primitives</BigButton>
      </GroupBody>
      <GroupName>Measure</GroupName>
    </Group>
    <Group $w={186}>
      <GroupBody $pad={6}>
        <BigButton $w={64}><BigIcon name="autoroute" />Autoroute<CaretBelow /></BigButton>
        <BigButton $w={57}><BigIcon name="fanout" />Fanout<CaretBelow /></BigButton>
        <SmallColumn $top={5} $left={1} $gap={6}>
          <SmallButton $dim><RoundIcon kind="stop" />Stop</SmallButton>
          <SmallButton><RoundIcon kind="reset" />Reset</SmallButton>
          <SmallButton $dim><RoundIcon kind="pause" /><span><u>P</u>ause</span></SmallButton>
        </SmallColumn>
      </GroupBody>
      <GroupName>AutoRoute</GroupName>
    </Group>
    <Group $w={86}>
      <GroupBody><BigButton $w={83}><BigIcon name="links" />Component<br />Links</BigButton></GroupBody>
      <GroupName>PCB Links</GroupName>
    </Group>
    <Group $w={86}>
      <GroupBody>
        <BigButton $w={82}><BigIcon name="swap" />Pin/Part<span>Swapping<Caret /></span></BigButton>
      </GroupBody>
      <GroupName>Swapping</GroupName>
    </Group>
  </Ribbon>
);

const DocTabs = () => (
  <DocBar>
    <DocTab $w={60}>
      <svg width="14" height="15" viewBox="0 0 14 15">
        <path d="M7 .5L.5 7v1H2v6.500h3.500V9h3v5.500H12V8h1.500V7z" fill="#2f86c8" stroke="#1d5d92" />
      </svg>
      Home
    </DocTab>
    <DocTab $w={116} $active>
      <svg width="13" height="11" viewBox="0 0 13 11">
        <rect width="13" height="11" fill="#fff" />
        <path d="M0 2.500h13M0 5.500h13M0 8.500h13" stroke={SKY} />
        <rect x="3.500" y="1" width="6" height="9" fill="#fff" stroke="#555" />
      </svg>
      PCB.PWPcbDoc *
    </DocTab>
  </DocBar>
);

const ComponentsDialog = () => (
  <Dialog $x={78} $y={180} $w={638} $h={490}>
    <DialogTitle $ls={0.02}>
      <span />
      Configure Swapping Information In Components
      <CloseCap $w={31} $h={20} $bg="#bcbcbc"><X /></CloseCap>
    </DialogTitle>
    <CompGrid>
      <GridLine $cols="365px 128px 1fr" $h={21}>
        <Band>Component Information</Band>
        <Band>Configure in Sch...</Band>
        <Band>Enable in PCB</Band>
      </GridLine>
      <GridLine $cols={COMP_COLS} $h={18}>
        {["Desig...", "Comment", "Footprint", "Library Reference", "Pins", "Parts"].map((h) => (
          <Head key={h} $ls={h.length > 12 ? -0.1 : 0}>{h}</Head>
        ))}
        <Head $pad={6}>Pin S...<SortMark><Triangle /></SortMark></Head>
        <Head $pad={5}>Part Swa...</Head>
        <Head $pad={8}>Pin Swap</Head>
        <Head $pad={7}>Part Swap</Head>
      </GridLine>
      <GridLine $cols={COMP_COLS} $h={17}>
        {["U2", "BCM20732S", "BCM20732S", "BCM20732S", "48", "1/1"].map((c, i) => <Cell key={i} $tone="#ebebeb">{c}</Cell>)}
        <Cell $tone="#fff" $pad={6}>(4/48)</Cell>
        <Cell $tone="#fff" $pad={6}>(43/48)</Cell>
        <Cell $tone="#ebebeb" $center>
          <Check><svg width="11" height="11" fill="none" stroke="#000" strokeWidth="2"><path d="M2 5l2.500 3L9 2" /></svg></Check>
        </Cell>
        <Cell $tone="#ebebeb" $center><Check /></Cell>
      </GridLine>
      <CompFooter><MenuButton /></CompFooter>
    </CompGrid>
  </Dialog>
);

const PinDialog = () => (
  <Dialog $x={104} $y={281} $w={984} $h={583} $gold>
    <DialogTitle $ls={0.11}>
      <span />
      Configure Pin Swapping For [U2 in car.PrjPcb / (No Configuration)]
      <CloseCap $w={31} $h={20} $bg="#c75050"><X /></CloseCap>
    </DialogTitle>
    <DialogBody>
      <Columns>
        <TabPane>
          <PageTabs>
            <PageTab $w={88} $active>Pin Swapping</PageTab>
            <PageTab $w={82}>Part Swapping</PageTab>
          </PageTabs>
          <Page>
            <PinGrid>
              <DragHint>Drag a column header here to group by that column</DragHint>
              <GridLine $cols="525px 75px" $h={21}>
                <Band>Pin Status</Band>
                <Band>Swap Data</Band>
              </GridLine>
              <GridLine $cols={PIN_COLS} $h={18}>
                <Head>Designator<SortMark><Triangle /></SortMark></Head>
                {["Pin Name", "Net", "Bus", "Type", "Part No.", "Pin Group"].map((h) => <Head key={h}>{h}</Head>)}
              </GridLine>
              {pins.map(([d, name, net, type, group]) => (
                <GridLine key={d} $cols={PIN_COLS} $h={17}>
                  <Cell>{d}</Cell>
                  <Cell $pad={3}>{name}</Cell>
                  <Cell $pad={3}>{net}</Cell>
                  <Cell />
                  <Cell $pad={3}>{type}</Cell>
                  <Cell $pad={3}>1</Cell>
                  <Cell $editable>{group}</Cell>
                </GridLine>
              ))}
            </PinGrid>
            <ScrollBar>
              <Chevron />
              <Thumb />
              <Chevron down />
            </ScrollBar>
          </Page>
        </TabPane>
        <Splitter />
        <Preview>Footprint preview: could not locate PcbDoc in the project</Preview>
      </Columns>
      <Buttons>
        <Button $primary>OK</Button>
        <Button>Cancel</Button>
      </Buttons>
    </DialogBody>
  </Dialog>
);

export default function App() {
  return (
    <Window>
      <Global />
      <Top />
      <RibbonBar />
      <DocTabs />
      <Workspace><Board /></Workspace>
      <LayerBar>
        <LayerSet>LS</LayerSet>
        {layers.map(([name, color, w]) => (
          <LayerTab key={name} $w={w} $active={name === "Outline"}><Swatch $c={color} />{name}</LayerTab>
        ))}
      </LayerBar>
      <StatusBar>
        <StatusText $w={110}>X:1999mil Y:3651mil</StatusText>
        <StatusText $w={70}>Grid: 1mil</StatusText>
        <StatusText $w={300}>(Hotspot Snap)</StatusText>
        <StatusRule />
        <StatusText $w={480}>3D Extruded  (3D Top)  Standoff=6.693mil  Overall=46.457mil  (16823.702mil, 17425.313mil)</StatusText>
        <StatusRule />
      </StatusBar>
      <ComponentsDialog />
      <PinDialog />
      <Pointer width="16" height="22" viewBox="0 0 16 22">
        <path d="M1.500 1v15.500l3.600-3.400 2.700 6.400 2.700-1.200-2.700-6.200h5z" fill="#fff" stroke="#223" />
      </Pointer>
    </Window>
  );
}
